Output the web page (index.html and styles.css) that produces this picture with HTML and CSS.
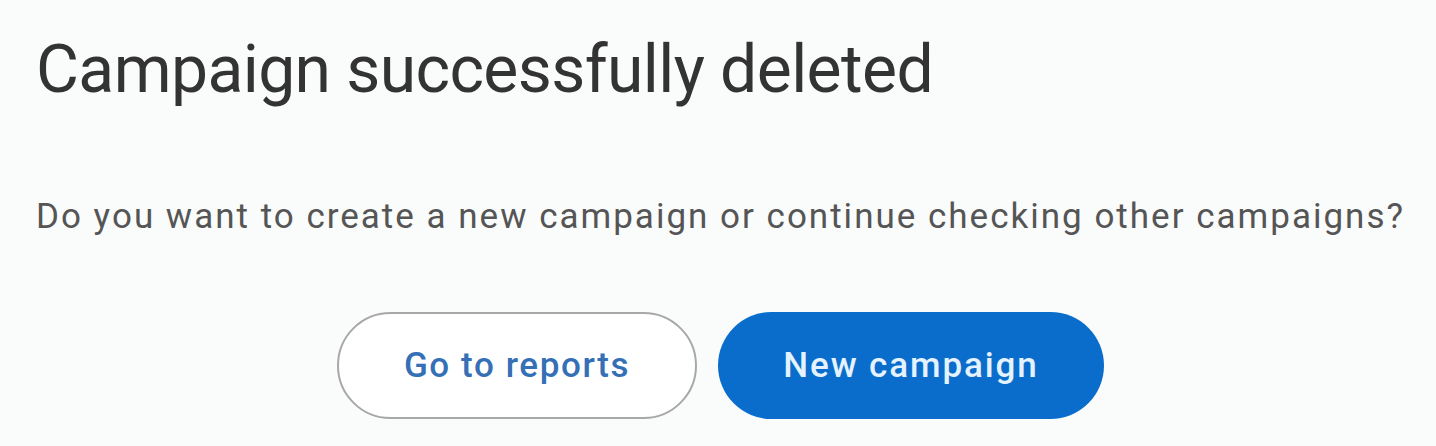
FILE: index.html
```html
<!DOCTYPE html>
<html lang="en">
<head>
  <meta charset="UTF-8">
  <title>Campaign deleted</title>
  <link rel="stylesheet" href="styles.css">
</head>
<body>
  <div class="dialog">
    <h1 class="dialog-title">Campaign successfully deleted</h1>
    <p class="dialog-text">Do you want to create a new campaign or continue checking other campaigns?</p>
    <div class="dialog-actions">
      <button class="btn btn-outline">Go to reports</button>
      <button class="btn btn-primary">New campaign</button>
    </div>
  </div>
</body>
</html>
```

FILE: styles.css
```css
body {
  margin: 0;
  padding: 0;
  font-family: Roboto, "Liberation Sans", sans-serif;
  background-color: #fafbfb;
  color: #333;
  overflow: hidden;
}

.dialog {
  padding: 30px 0 0 36px;
}

.dialog-title {
  font-size: 66px;
  font-weight: 400;
  line-height: 80px;
  letter-spacing: -0.6px;
  margin: 0;
  color: #333;
}

.dialog-text {
  font-size: 35px;
  line-height: 40px;
  letter-spacing: 2px;
  white-space: nowrap;
  margin: 87px 0 0 0;
  color: #555;
}

.dialog-actions {
  display: flex;
  justify-content: center;
  gap: 21px;
  margin-top: 75px;
  padding-right: 31px;
}

.btn {
  height: 107px;
  border-radius: 54px;
  font-family: Roboto, "Liberation Sans", sans-serif;
  font-size: 35px;
  font-weight: 500;
  cursor: pointer;
}

.btn-outline {
  width: 360px;
  background: #fff;
  border: 2px solid #a8a8a8;
  color: #3570b6;
  letter-spacing: 1.6px;
}

.btn-primary {
  width: 386px;
  background: #0a6dcb;
  border: none;
  color: #e4f3ff;
  letter-spacing: 1.9px;
}
```
